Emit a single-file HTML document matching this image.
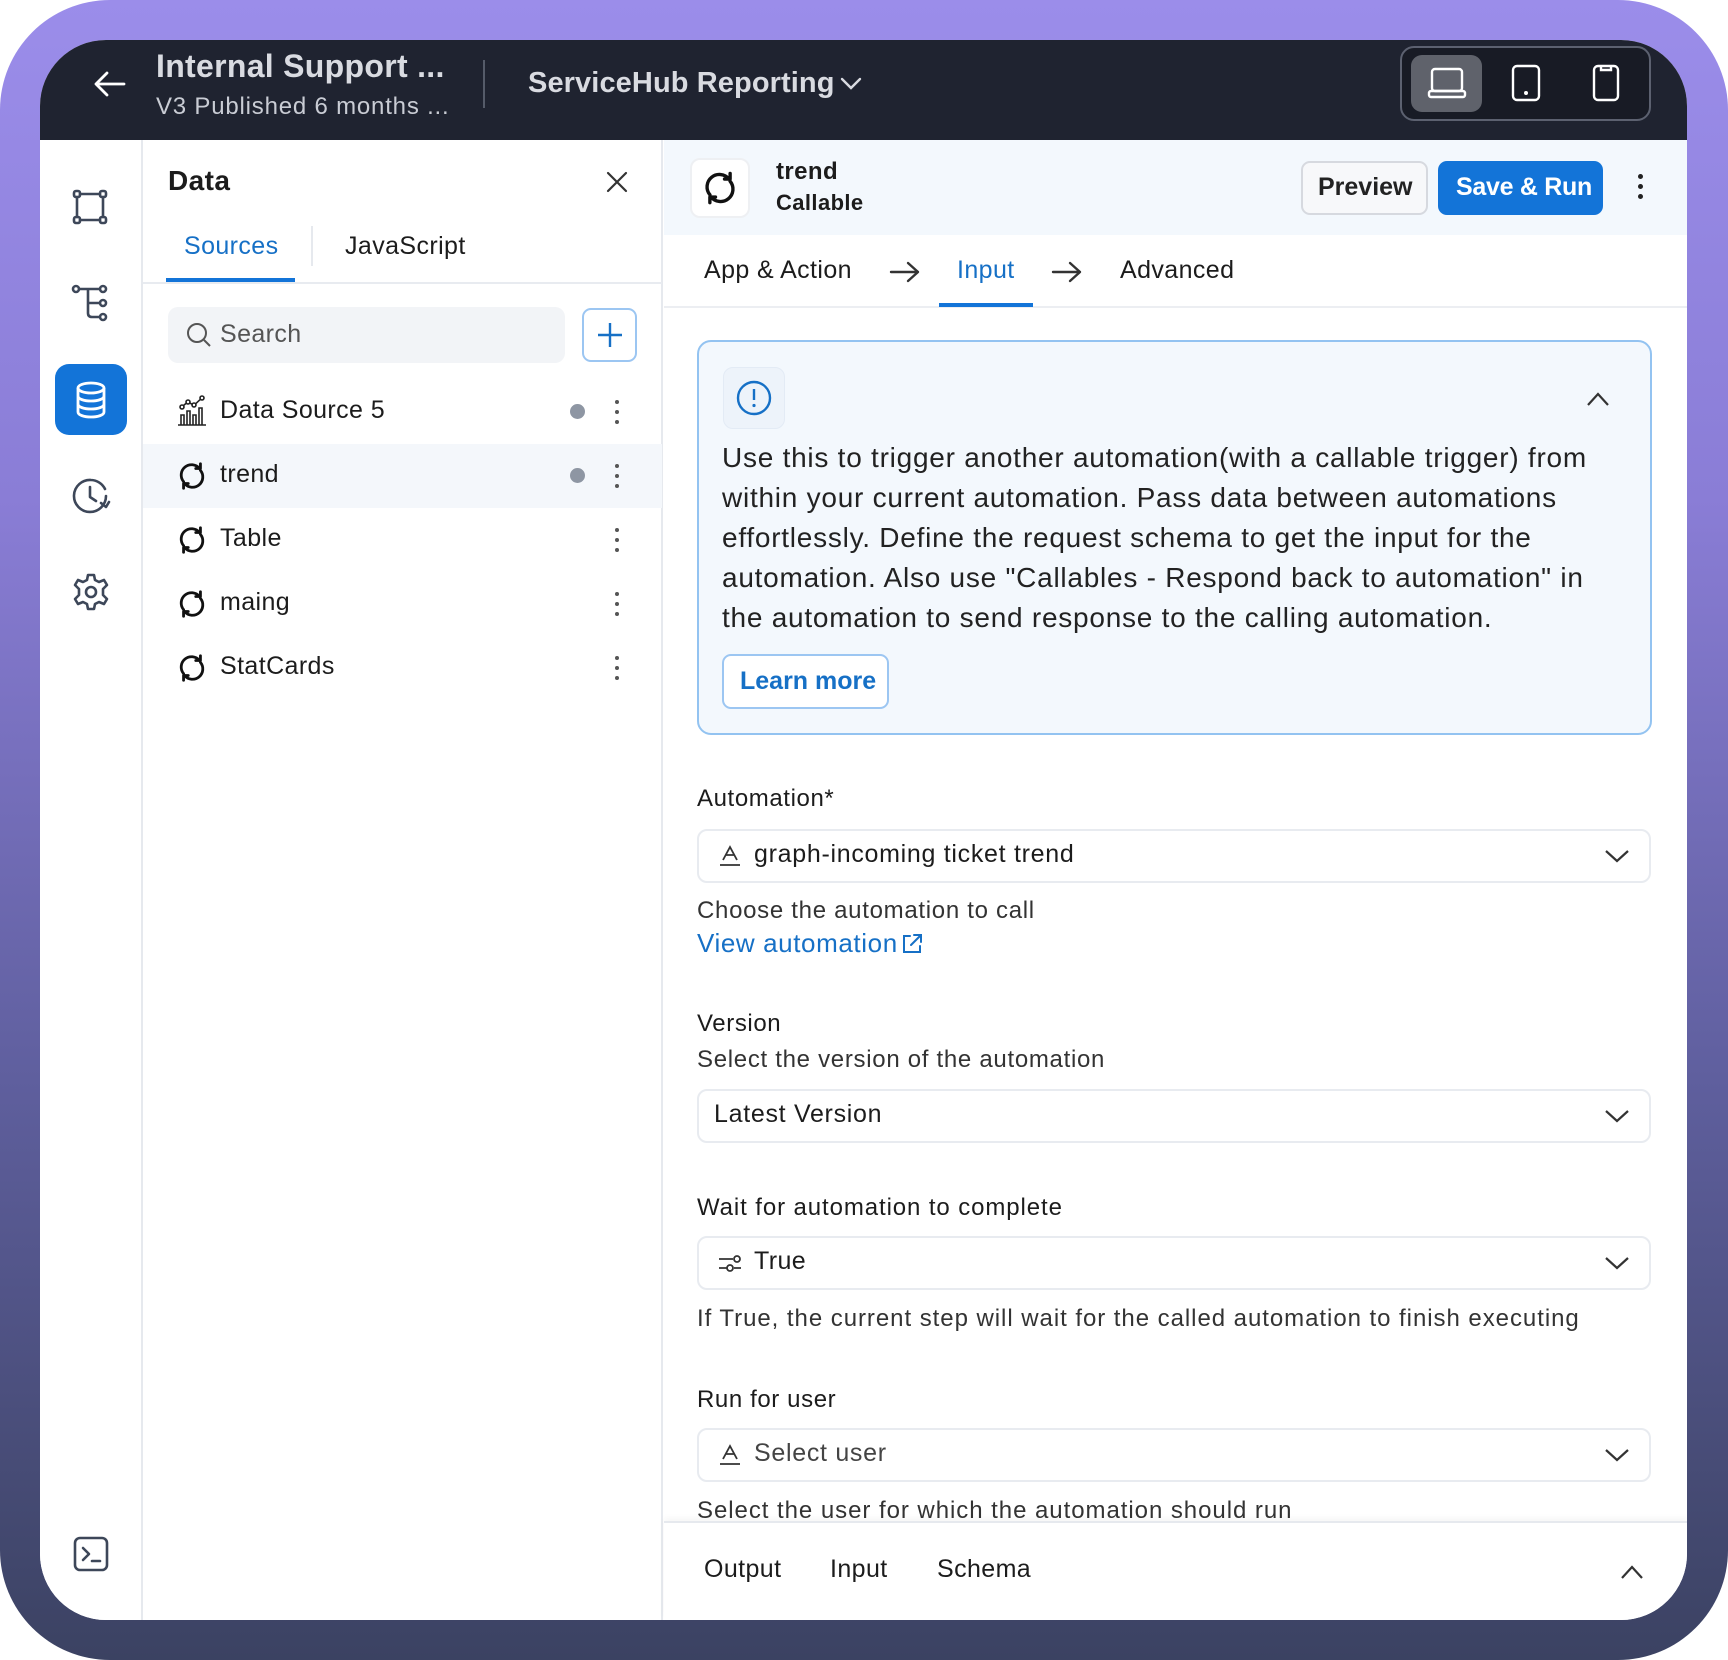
<!DOCTYPE html>
<html><head><meta charset="utf-8"><style>
*{box-sizing:border-box;margin:0;padding:0}
body{width:1728px;height:1660px;overflow:hidden;font-family:"Liberation Sans",sans-serif;background:#fff;position:relative;color:#1c1c1c;letter-spacing:0.4px}
.frame{position:absolute;left:0;top:0;width:1728px;height:1660px;border-radius:110px;background:linear-gradient(180deg,#9b8dea 0%,#8a7dd6 30%,#5f5f9e 65%,#3b4262 100%)}
.app{position:absolute;left:40px;top:40px;width:1647px;height:1580px;background:#fff;border-radius:66px;overflow:hidden}
.abs{position:absolute}
.hdr{left:0;top:0;width:1647px;height:100px;background:#1f2330}
.t{position:absolute;white-space:nowrap}
svg{position:absolute;overflow:visible}
.ic{fill:none;stroke:#3d4759;stroke-width:2.6;stroke-linecap:round;stroke-linejoin:round}
.sel{position:absolute;left:657px;width:954px;height:54px;border:2px solid #e8ebf0;border-radius:10px;background:#fff}
.lbl{font-size:24px;color:#1c1c1c;letter-spacing:0.6px}
.hint{font-size:24px;color:#333;letter-spacing:0.7px}
</style></head><body>
<div class="frame"></div>
<div class="app">
 <div class="abs hdr">
  <svg width="40" height="40" style="left:50px;top:25px" viewBox="0 0 40 40"><path d="M34 19H6M17 8 6 19l11 11" fill="none" stroke="#fff" stroke-width="2.8" stroke-linecap="round" stroke-linejoin="round"/></svg>
  <div class="t" style="left:116px;top:8px;font-size:32px;color:#d9dbe1;font-weight:bold;letter-spacing:0.3px">Internal Support ...</div>
  <div class="t" style="left:116px;top:53px;font-size:24px;color:#c9ccd4;letter-spacing:0.8px">V3 Published 6 months ...</div>
  <div class="abs" style="left:443px;top:20px;width:2px;height:48px;background:#555b69"></div>
  <div class="t" style="left:488px;top:27px;font-size:29px;color:#d9dbe1;font-weight:bold;letter-spacing:0.1px">ServiceHub Reporting</div>
  <svg width="24" height="24" style="left:799px;top:32px" viewBox="0 0 24 24"><path d="M3 7l9 9 9-9" fill="none" stroke="#d9dbe1" stroke-width="2.4" stroke-linecap="round"/></svg>
  <div class="abs" style="left:1360px;top:6px;width:251px;height:75px;border:2px solid #5c6170;border-radius:14px;background:#181b25"></div>
  <div class="abs" style="left:1371px;top:15px;width:71px;height:57px;border-radius:11px;background:#5f626b"></div>
  <svg width="40" height="40" style="left:1387px;top:24px" viewBox="0 0 40 40"><g fill="none" stroke="#fff" stroke-width="2.4" stroke-linejoin="round"><rect x="5" y="5" width="30" height="22" rx="3"/><rect x="2" y="27" width="36" height="6" rx="2"/></g></svg>
  <svg width="40" height="40" style="left:1466px;top:24px" viewBox="0 0 40 40"><rect x="7" y="2" width="26" height="34" rx="4" fill="none" stroke="#fff" stroke-width="2.4"/><circle cx="20" cy="29" r="2" fill="#fff"/></svg>
  <svg width="40" height="40" style="left:1546px;top:24px" viewBox="0 0 40 40"><rect x="8" y="2" width="24" height="34" rx="4" fill="none" stroke="#fff" stroke-width="2.4"/><path d="M15 3v3h10V3" fill="none" stroke="#fff" stroke-width="2.4"/></svg>
 </div>
 <!-- rail -->
 <div class="abs" style="left:0;top:100px;width:103px;height:1480px;border-right:2px solid #e6e9ee;background:#fff"></div>
 <svg width="40" height="40" style="left:30px;top:147px" viewBox="0 0 40 40" class="ic"><rect x="4" y="4" width="6" height="6" rx="2"/><rect x="30" y="4" width="6" height="6" rx="2"/><rect x="4" y="30" width="6" height="6" rx="2"/><rect x="30" y="30" width="6" height="6" rx="2"/><path d="M10 7h20M10 33h20M7 10v20M33 10v20"/></svg>
 <svg width="40" height="40" style="left:30px;top:243px" viewBox="0 0 40 40" class="ic"><circle cx="6" cy="6" r="3"/><circle cx="33" cy="6" r="3"/><circle cx="33" cy="20" r="3"/><circle cx="33" cy="34" r="3"/><path d="M9 6h21M18 6v24q0 4 4 4h8M18 20h12"/></svg>
 <div class="abs" style="left:15px;top:324px;width:72px;height:71px;border-radius:14px;background:#1374d8"></div>
 <svg width="40" height="40" style="left:31px;top:340px" viewBox="0 0 40 40" fill="none" stroke="#fff" stroke-width="2.8"><ellipse cx="20" cy="8" rx="13" ry="5"/><path d="M7 8v24c0 3 6 5 13 5s13-2 13-5V8M7 16c0 3 6 5 13 5s13-2 13-5M7 24c0 3 6 5 13 5s13-2 13-5"/></svg>
 <svg width="40" height="40" style="left:31px;top:436px" viewBox="0 0 40 40" class="ic"><path d="M35 20A16 16 0 1 1 20 4a16 16 0 0 1 14 9"/><path d="M19 11v10l6 4"/><path d="M30 27l5 4 3-5"/></svg>
 <svg width="40" height="40" style="left:31px;top:532px" viewBox="0 0 40 40" class="ic"><circle cx="20" cy="20" r="5"/><path d="M17 3h6l1 5 4 2 5-2 3 5-4 4v6l4 4-3 5-5-2-4 2-1 5h-6l-1-5-4-2-5 2-3-5 4-4v-6l-4-4 3-5 5 2 4-2z"/></svg>
 <svg width="40" height="40" style="left:31px;top:1494px" viewBox="0 0 40 40" class="ic"><rect x="4" y="4" width="32" height="32" rx="5"/><path d="M12 14l6 6-6 6M21 27h8"/></svg>

 <!-- data panel -->
 <div class="abs" style="left:103px;top:100px;width:520px;height:1480px;border-right:2px solid #e6e9ee;background:#fff"></div>
 <div class="t" style="left:128px;top:125px;font-size:28px;font-weight:bold;color:#1c1c1c">Data</div>
 <svg width="24" height="24" style="left:565px;top:130px" viewBox="0 0 24 24"><path d="M3 3l18 18M21 3 3 21" stroke="#333" stroke-width="2.2" stroke-linecap="round"/></svg>
 <div class="t" style="left:144px;top:192px;font-size:25px;color:#1670c6">Sources</div>
 <div class="t" style="left:305px;top:192px;font-size:25px;color:#1c1c1c">JavaScript</div>
 <div class="abs" style="left:271px;top:186px;width:2px;height:40px;background:#e6e9ee"></div>
 <div class="abs" style="left:103px;top:242px;width:519px;height:2px;background:#e8ebf0"></div>
 <div class="abs" style="left:126px;top:238px;width:129px;height:4px;background:#1374d8"></div>
 <div class="abs" style="left:128px;top:267px;width:397px;height:56px;border-radius:10px;background:#f2f4f7"></div>
 <svg width="26" height="26" style="left:146px;top:282px" viewBox="0 0 26 26"><circle cx="11" cy="11" r="9" fill="none" stroke="#555" stroke-width="2"/><path d="M18 18l6 6" stroke="#555" stroke-width="2"/></svg>
 <div class="t" style="left:180px;top:280px;font-size:25px;color:#555">Search</div>
 <div class="abs" style="left:542px;top:268px;width:55px;height:54px;border-radius:9px;border:2px solid #9cc6f2;background:#fff"></div>
 <svg width="26" height="26" style="left:557px;top:282px" viewBox="0 0 26 26"><path d="M13 1v24M1 13h24" stroke="#1670c6" stroke-width="2.4"/></svg>

 <div class="abs" style="left:103px;top:404px;width:519px;height:64px;background:#f4f7fb"></div>
 <svg width="32" height="32" style="left:136px;top:355px" viewBox="0 0 32 32" fill="none" stroke="#222" stroke-width="1.6"><path d="M2 30h28M5 30V20h3v10M11 30V16h3v14M17 30V20h3v10M23 30V13h3v17"/><circle cx="6" cy="12" r="2"/><circle cx="12" cy="7" r="2"/><circle cx="18" cy="10" r="2"/><circle cx="26" cy="3" r="2"/><path d="M7.5 10.5l3-2.5M13.8 8l2.4 1.3M19.6 8.8l4.8-4.5"/></svg>
 <div class="t" style="left:180px;top:356px;font-size:25px">Data Source 5</div>
 <div class="abs" style="left:530px;top:364px;width:15px;height:15px;border-radius:50%;background:#8e96a3"></div>
 <div class="abs" style="left:575px;top:360px;width:4px;height:4px;border-radius:2px;background:#555;box-shadow:0 10px #555,0 20px #555"></div>
 <div class="abs" style="left:530px;top:428px;width:15px;height:15px;border-radius:50%;background:#8e96a3"></div>
 <div class="abs" style="left:575px;top:424px;width:4px;height:4px;border-radius:2px;background:#555;box-shadow:0 10px #555,0 20px #555"></div>
 <div class="t" style="left:180px;top:420px;font-size:25px">trend</div>
 <div class="t" style="left:180px;top:484px;font-size:25px">Table</div>
 <div class="abs" style="left:575px;top:488px;width:4px;height:4px;border-radius:2px;background:#555;box-shadow:0 10px #555,0 20px #555"></div>
 <div class="t" style="left:180px;top:548px;font-size:25px">maing</div>
 <div class="abs" style="left:575px;top:552px;width:4px;height:4px;border-radius:2px;background:#555;box-shadow:0 10px #555,0 20px #555"></div>
 <div class="t" style="left:180px;top:612px;font-size:25px">StatCards</div>
 <div class="abs" style="left:575px;top:616px;width:4px;height:4px;border-radius:2px;background:#555;box-shadow:0 10px #555,0 20px #555"></div>

 <!-- right panel -->
 <div class="abs" style="left:624px;top:100px;width:1023px;height:95px;background:#f3f8fd"></div>
 <div class="abs" style="left:650px;top:118px;width:60px;height:60px;border-radius:10px;background:#fff;border:2px solid #eef0f3"></div>
 <div class="t" style="left:736px;top:118px;font-size:24px;font-weight:bold">trend</div>
 <div class="t" style="left:736px;top:150px;font-size:22px;font-weight:bold">Callable</div>
 <div class="abs" style="left:1261px;top:121px;width:127px;height:54px;border-radius:9px;border:2px solid #d6d9df;background:#f7f8fa"></div>
 <div class="t" style="left:1278px;top:133px;font-size:25px;font-weight:bold;color:#222;letter-spacing:0">Preview</div>
 <div class="abs" style="left:1398px;top:121px;width:165px;height:54px;border-radius:9px;background:#1374d8"></div>
 <div class="t" style="left:1416px;top:133px;font-size:25px;font-weight:bold;color:#fff;letter-spacing:-0.3px">Save &amp; Run</div>
 <div class="abs" style="left:1598px;top:134px;width:5px;height:5px;border-radius:3px;background:#222;box-shadow:0 10px #222,0 20px #222"></div>

 <div class="t" style="left:664px;top:216px;font-size:25px">App &amp; Action</div>
 <svg width="32" height="24" style="left:849px;top:220px" viewBox="0 0 32 24"><path d="M2 12h27M19 3l10 9-10 9" fill="none" stroke="#333" stroke-width="2.4" stroke-linecap="round" stroke-linejoin="round"/></svg>
 <div class="t" style="left:917px;top:216px;font-size:25px;color:#1670c6">Input</div>
 <svg width="32" height="24" style="left:1011px;top:220px" viewBox="0 0 32 24"><path d="M2 12h27M19 3l10 9-10 9" fill="none" stroke="#333" stroke-width="2.4" stroke-linecap="round" stroke-linejoin="round"/></svg>
 <div class="t" style="left:1080px;top:216px;font-size:25px">Advanced</div>
 <div class="abs" style="left:624px;top:266px;width:1023px;height:2px;background:#eceef2"></div>
 <div class="abs" style="left:899px;top:263px;width:94px;height:4px;background:#1374d8"></div>

 <div class="abs" style="left:657px;top:300px;width:955px;height:395px;border-radius:14px;border:2px solid #93c3f1;background:#f3f8fd"></div>
 <div class="abs" style="left:683px;top:327px;width:62px;height:62px;border-radius:10px;background:#edf3fa;border:1px solid #e3ebf5"></div>
 <svg width="38" height="38" style="left:695px;top:339px" viewBox="0 0 38 38"><circle cx="19" cy="19" r="16" fill="none" stroke="#1670c6" stroke-width="2.4"/><path d="M19 10v11" stroke="#1670c6" stroke-width="2.4"/><circle cx="19" cy="26.5" r="1.6" fill="#1670c6"/></svg>
 <svg width="24" height="16" style="left:1546px;top:351px" viewBox="0 0 24 16"><path d="M2 14 12 3l10 11" fill="none" stroke="#333" stroke-width="2.2"/></svg>
 <div class="abs" style="left:682px;top:398px;width:930px;font-size:28px;line-height:40px;color:#222;letter-spacing:0.75px;white-space:nowrap">Use this to trigger another automation(with a callable trigger) from<br>within your current automation. Pass data between automations<br>effortlessly. Define the request schema to get the input for the<br>automation. Also use "Callables - Respond back to automation" in<br>the automation to send response to the calling automation.</div>
 <div class="abs" style="left:682px;top:614px;width:167px;height:55px;border-radius:9px;border:2px solid #9cc6f2;background:#fff"></div>
 <div class="t" style="left:700px;top:627px;font-size:25px;font-weight:bold;color:#1670c6;letter-spacing:0">Learn more</div>

 <div class="t lbl" style="left:657px;top:745px">Automation*</div>
 <div class="sel" style="top:789px"></div>
 <svg width="24" height="24" style="left:678px;top:804px" viewBox="0 0 24 24"><path d="M5 16 12 3l7 13M8 11h8M2 21h20" fill="none" stroke="#333" stroke-width="1.8"/></svg>
 <div class="t" style="left:714px;top:800px;font-size:25px;letter-spacing:0.7px">graph-incoming ticket trend</div>
 <svg width="26" height="16" style="left:1564px;top:808px" viewBox="0 0 26 16"><path d="M2 3l11 10L24 3" fill="none" stroke="#333" stroke-width="2.2"/></svg>
 <div class="t hint" style="left:657px;top:857px">Choose the automation to call</div>
 <div class="t" style="left:657px;top:888px;font-size:26px;color:#1670c6;letter-spacing:0.6px">View automation</div>
 <svg width="24" height="24" style="left:860px;top:892px" viewBox="0 0 24 24"><path d="M10 4H4v16h16v-6M14 3h7v7M21 3 11 13" fill="none" stroke="#1670c6" stroke-width="2" stroke-linecap="round"/></svg>

 <div class="t lbl" style="left:657px;top:970px">Version</div>
 <div class="t hint" style="left:657px;top:1006px">Select the version of the automation</div>
 <div class="sel" style="top:1049px"></div>
 <div class="t" style="left:674px;top:1060px;font-size:25px;letter-spacing:0.7px">Latest Version</div>
 <svg width="26" height="16" style="left:1564px;top:1068px" viewBox="0 0 26 16"><path d="M2 3l11 10L24 3" fill="none" stroke="#333" stroke-width="2.2"/></svg>

 <div class="t lbl" style="left:657px;top:1154px;letter-spacing:0.9px">Wait for automation to complete</div>
 <div class="sel" style="top:1196px"></div>
 <svg width="26" height="24" style="left:677px;top:1211px" viewBox="0 0 26 24"><path d="M2 8h14M2 17h8M17 17h7" stroke="#333" stroke-width="1.8" fill="none"/><circle cx="20" cy="8" r="3" fill="none" stroke="#333" stroke-width="1.8"/><circle cx="13" cy="17" r="3" fill="none" stroke="#333" stroke-width="1.8"/></svg>
 <div class="t" style="left:714px;top:1207px;font-size:25px">True</div>
 <svg width="26" height="16" style="left:1564px;top:1215px" viewBox="0 0 26 16"><path d="M2 3l11 10L24 3" fill="none" stroke="#333" stroke-width="2.2"/></svg>
 <div class="t hint" style="left:657px;top:1265px;letter-spacing:0.95px">If True, the current step will wait for the called automation to finish executing</div>

 <div class="t lbl" style="left:657px;top:1346px">Run for user</div>
 <div class="sel" style="top:1388px"></div>
 <svg width="24" height="24" style="left:678px;top:1403px" viewBox="0 0 24 24"><path d="M5 16 12 3l7 13M8 11h8M2 21h20" fill="none" stroke="#333" stroke-width="1.8"/></svg>
 <div class="t" style="left:714px;top:1399px;font-size:25px;color:#444;letter-spacing:0.7px">Select user</div>
 <svg width="26" height="16" style="left:1564px;top:1407px" viewBox="0 0 26 16"><path d="M2 3l11 10L24 3" fill="none" stroke="#333" stroke-width="2.2"/></svg>
 <div class="t hint" style="left:657px;top:1457px;letter-spacing:0.95px">Select the user for which the automation should run</div>

 <div class="abs" style="left:624px;top:1481px;width:1023px;height:99px;background:#fff;border-top:2px solid #e6e9ee;box-shadow:0 -3px 6px rgba(0,0,0,.04)"></div>
 <div class="t" style="left:664px;top:1515px;font-size:25px">Output</div>
 <div class="t" style="left:790px;top:1515px;font-size:25px">Input</div>
 <div class="t" style="left:897px;top:1515px;font-size:25px">Schema</div>
 <svg width="24" height="16" style="left:1580px;top:1524px" viewBox="0 0 24 16"><path d="M2 14 12 3l10 11" fill="none" stroke="#333" stroke-width="2.2"/></svg>
</div>
<svg width="36" height="36" style="left:702px;top:170px" viewBox="0 0 32 32" fill="none" stroke="#111" stroke-width="3" stroke-linecap="round" stroke-linejoin="round"><path d="M24 8A11 11 0 0 0 7 22M8 24A11 11 0 0 0 25 10"/><path d="M20 8h5V3M12 24H7v5"/></svg>
<svg width="30" height="30" style="left:177px;top:461px" viewBox="0 0 32 32" fill="none" stroke="#111" stroke-width="3" stroke-linecap="round" stroke-linejoin="round"><path d="M24 8A11 11 0 0 0 7 22M8 24A11 11 0 0 0 25 10"/><path d="M20 8h5V3M12 24H7v5"/></svg>
<svg width="30" height="30" style="left:177px;top:525px" viewBox="0 0 32 32" fill="none" stroke="#111" stroke-width="3" stroke-linecap="round" stroke-linejoin="round"><path d="M24 8A11 11 0 0 0 7 22M8 24A11 11 0 0 0 25 10"/><path d="M20 8h5V3M12 24H7v5"/></svg>
<svg width="30" height="30" style="left:177px;top:589px" viewBox="0 0 32 32" fill="none" stroke="#111" stroke-width="3" stroke-linecap="round" stroke-linejoin="round"><path d="M24 8A11 11 0 0 0 7 22M8 24A11 11 0 0 0 25 10"/><path d="M20 8h5V3M12 24H7v5"/></svg>
<svg width="30" height="30" style="left:177px;top:653px" viewBox="0 0 32 32" fill="none" stroke="#111" stroke-width="3" stroke-linecap="round" stroke-linejoin="round"><path d="M24 8A11 11 0 0 0 7 22M8 24A11 11 0 0 0 25 10"/><path d="M20 8h5V3M12 24H7v5"/></svg>
</body></html>
